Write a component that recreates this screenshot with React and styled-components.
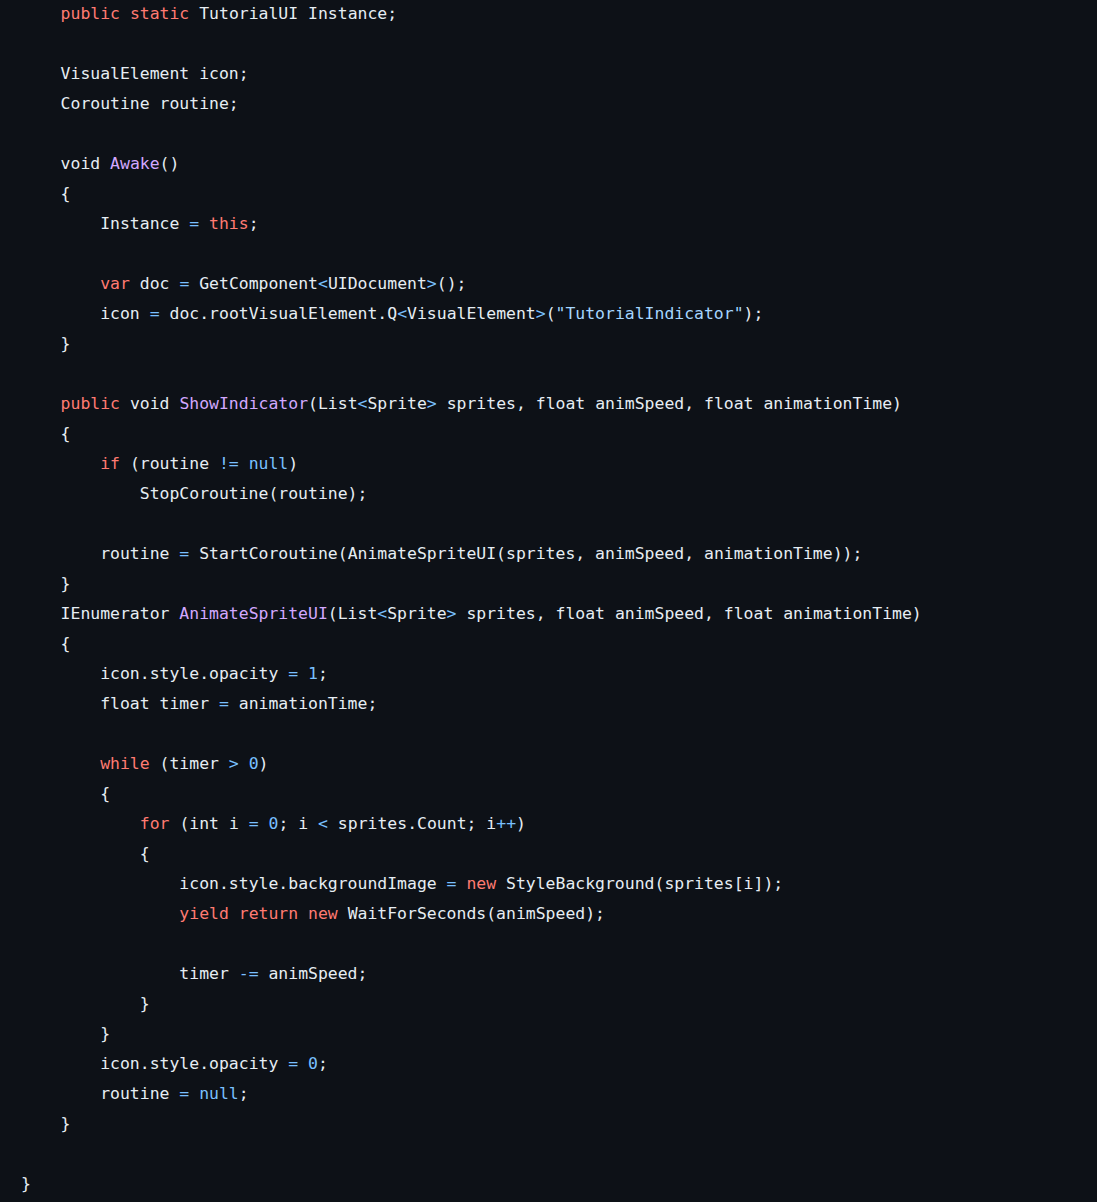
import React from "react";
import styled, { createGlobalStyle } from "styled-components";

const GlobalStyle = createGlobalStyle`
  html, body {
    margin: 0;
    padding: 0;
    background: #0d1117;
  }
  #root {
    min-height: 100vh;
    background: #0d1117;
  }
`;

const CodeBlock = styled.pre`
  margin: -1px 0 0 0;
  padding: 0 0 0 21px;
  background: #0d1117;
  color: #e6edf3;
  font-family: "DejaVu Sans Mono", "Liberation Mono", monospace;
  font-size: 16.45px;
  line-height: 30px;
  white-space: pre;
  overflow: hidden;
`;

const Line = styled.div`
  height: 30px;
`;

const colors = {
  keyword: "#ff7b72",
  func: "#d2a8ff",
  constant: "#79c0ff",
  string: "#a5d6ff",
  plain: "#e6edf3",
};

const Token = styled.span`
  color: ${(p) => colors[p.$kind] || colors.plain};
`;

const SOURCE = `    public static TutorialUI Instance;

    VisualElement icon;
    Coroutine routine;

    void Awake()
    {
        Instance = this;

        var doc = GetComponent<UIDocument>();
        icon = doc.rootVisualElement.Q<VisualElement>("TutorialIndicator");
    }

    public void ShowIndicator(List<Sprite> sprites, float animSpeed, float animationTime)
    {
        if (routine != null)
            StopCoroutine(routine);

        routine = StartCoroutine(AnimateSpriteUI(sprites, animSpeed, animationTime));
    }
    IEnumerator AnimateSpriteUI(List<Sprite> sprites, float animSpeed, float animationTime)
    {
        icon.style.opacity = 1;
        float timer = animationTime;

        while (timer > 0)
        {
            for (int i = 0; i < sprites.Count; i++)
            {
                icon.style.backgroundImage = new StyleBackground(sprites[i]);
                yield return new WaitForSeconds(animSpeed);

                timer -= animSpeed;
            }
        }
        icon.style.opacity = 0;
        routine = null;
    }

}`;

const KEYWORDS = new Set([
  "public",
  "static",
  "var",
  "this",
  "new",
  "yield",
  "return",
  "if",
  "while",
  "for",
]);
const FUNCS = new Set(["Awake", "ShowIndicator", "AnimateSpriteUI"]);
const CONSTS = new Set(["null"]);

function tokenize(line) {
  const re = /("[^"]*")|(\b\d+\b)|(!=|-=|\+\+|[=<>])|([A-Za-z_]\w*)|(\s+)|(.)/g;
  const out = [];
  let m;
  while ((m = re.exec(line))) {
    const [t, str, num, op, word] = m;
    let kind = "plain";
    if (str) kind = "string";
    else if (num || op) kind = "constant";
    else if (word) {
      if (KEYWORDS.has(word)) kind = "keyword";
      else if (CONSTS.has(word)) kind = "constant";
      else if (FUNCS.has(word)) kind = "func";
    }
    out.push({ t, kind });
  }
  return out;
}

function isDeclaration(line) {
  return /^\s*(public\s+)?(void|IEnumerator)\s/.test(line);
}

function CodeLine({ text }) {
  const decl = isDeclaration(text);
  const tokens = tokenize(text);
  return (
    <Line>
      {tokens.map((tk, i) => (
        <Token
          key={i}
          $kind={tk.kind === "func" && !decl ? "plain" : tk.kind}
        >
          {tk.t}
        </Token>
      ))}
    </Line>
  );
}

export default function App() {
  const lines = SOURCE.split("\n");
  return (
    <>
      <GlobalStyle />
      <CodeBlock>
        {lines.map((l, i) => (
          <CodeLine key={i} text={l} />
        ))}
      </CodeBlock>
    </>
  );
}
